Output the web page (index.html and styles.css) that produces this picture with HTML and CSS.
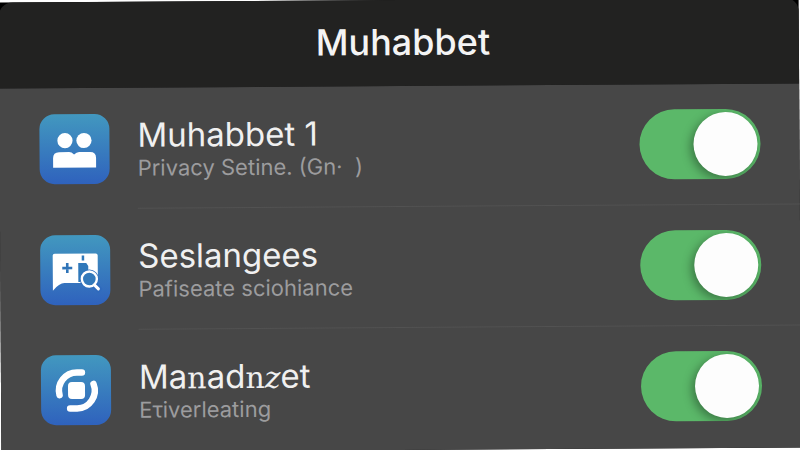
FILE: index.html
```
<!DOCTYPE html>
<html lang="tr">
<head>
  <meta charset="UTF-8" />
  <meta name="viewport" content="width=device-width, initial-scale=1" />
  <title>Muhabbet</title>
  <link rel="stylesheet" href="styles.css">
</head>
<body>

  <main class="panel">
    <header class="header">
      <h1>Muhabbet</h1>
    </header>

    <ul class="settings">
      <li class="row">
        <span class="icon">
          <svg viewBox="0 0 70 70" fill="#fff" aria-hidden="true">
            <circle cx="25.500" cy="26.500" r="7.600" />
            <circle cx="44.500" cy="26.500" r="7.600" />
            <path d="M13.500 53.500V44q0-6 6-6h10q2.500 0 5 2.500q2.500-2.500 5-2.500h11q6 0 6 6v9.500z" />
          </svg>
        </span>
        <div class="content">
          <label class="text" for="muhabbet">
            <span class="name">Muhabbet 1</span>
            <span class="detail">Privacy Setine. (Gn· &nbsp;)</span>
          </label>
          <input class="switch" type="checkbox" role="switch" id="muhabbet" checked>
        </div>
      </li>

      <li class="row">
        <span class="icon">
          <svg viewBox="0 0 70 70" fill="#fff" aria-hidden="true">
            <path d="M14.500 18.500h41q2 0 2 2V48H24q-5 0-11.500 7.500V20.500q0-2 2-2z" />
            <path d="M27 28v10M22 33h10" fill="none" stroke="#2f74b8" stroke-width="2.600" />
            <path d="M41.500 20.500h2.500v5h-2.500zM38 28h8l2 3v6l-5 3-3 7h-2z" fill="#2f78ba" />
            <circle cx="49" cy="44" r="9.500" fill="#2f6fbc" />
            <path d="M53 49l7 7" stroke="#2f6abd" stroke-width="6" />
            <circle cx="49" cy="44" r="7.500" fill="#3379bb" stroke="#fff" stroke-width="2.400" />
            <path d="M54 50l4 4" stroke="#fff" stroke-width="3" stroke-linecap="round" />
          </svg>
        </span>
        <div class="content">
          <label class="text" for="seslangees">
            <span class="name">Seslangees</span>
            <span class="detail">Pafiseate sciohiance</span>
          </label>
          <input class="switch" type="checkbox" role="switch" id="seslangees" checked>
        </div>
      </li>

      <li class="row">
        <span class="icon">
          <svg viewBox="0 0 70 70" fill="none" aria-hidden="true">
            <rect x="27" y="27" width="17" height="17" rx="4" fill="#fff" />
            <path d="M41 17.500H36A18 18 0 0 0 18.500 40M29 53.500H36A18 18 0 0 0 52.500 29" stroke="#fff" stroke-width="6.500" stroke-linecap="round" />
          </svg>
        </span>
        <div class="content">
          <label class="text" for="manadnzet">
            <span class="name">Ma<span class="slab">n</span>ad<span class="slab">n</span><i class="slab">z</i>et</span>
            <span class="detail">Eτiverleating</span>
          </label>
          <input class="switch" type="checkbox" role="switch" id="manadnzet" checked>
        </div>
      </li>
    </ul>
  </main>

</body>
</html>
```
FILE: styles.css
```
* { box-sizing: border-box; }
html { height: 100%; overflow: hidden; background: #fff; }
body { height: 100%; margin: 0; font-family: Inter, "Liberation Sans", sans-serif; }

/* the whole sheet leans slightly to the left */
.panel {
  display: flex; flex-direction: column;
  min-height: 100%;
  background: #000;
  transform: rotate(-0.36deg);
}

.header {
  padding: 18px 24px 20px 32px;
  background: #222221;
  border-radius: 14px 14px 0 0;
  text-align: center;
}
.header h1 { margin: 0; font-size: 36px; line-height: 48px; font-weight: 500; color: #f4f4f4; }

.settings {
  flex: 1;
  margin: 0; padding: 0;
  list-style: none;
  background: #474747;
}
.row { display: flex; align-items: center; gap: 28px; padding-left: 40px; }
.icon {
  flex: none;
  width: 70px; height: 70px;
  border-radius: 15px;
  background: linear-gradient(#4298bf, #2f62bd);
}
.icon svg { display: block; }

.content {
  flex: 1;
  display: flex; align-items: center; justify-content: space-between;
  padding: 25px 39px 25px 0;
  border-bottom: 1px solid #525252;
}
.row:last-child .content { border-bottom: 0; }
.text { display: flex; flex-direction: column; padding-top: 2px; }
.name { font-size: 33px; line-height: 38px; color: #f0f0f0; }
.detail { font-size: 22px; line-height: 28px; color: #9c9c9e; }
.slab { font-family: "DejaVu Serif", serif; font-size: 30px; line-height: 1; }

.switch {
  appearance: none;
  flex: none;
  width: 121px; height: 70px;
  margin: 0; padding: 3px;
  border-radius: 35px;
  background: #777;
  overflow: hidden;
  cursor: pointer;
}
.switch::before {
  content: "";
  display: block;
  width: 64px; height: 64px;
  border-radius: 50%;
  background: #fdfdfd;
  box-shadow: -3px 3px 10px rgba(0, 0, 0, 0.35);
}
.switch:checked { background: #5bb869; }
.switch:checked::before { margin-left: auto; }
```
